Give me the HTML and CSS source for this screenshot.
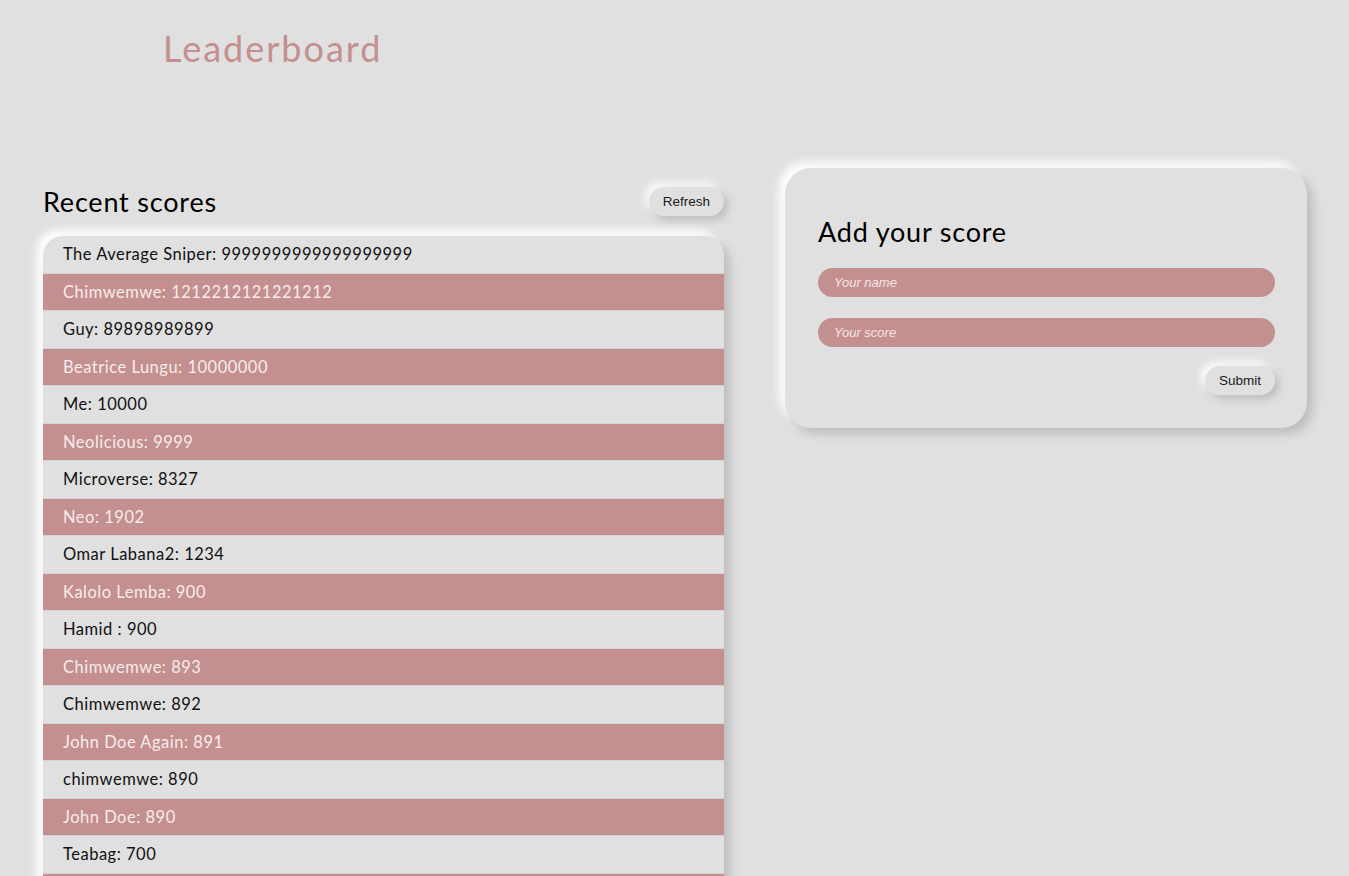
FILE: index.html
```html
<!DOCTYPE html>
<html lang="en">
<head>
<meta charset="utf-8">
<title>Leaderboard</title>
<link rel="stylesheet" href="styles.css">
</head>
<body>
<header class="top">
  <h1 class="brand">Leaderboard</h1>
</header>
<main class="layout">
  <section class="scores">
    <div class="scores-head">
      <h2 class="section-title">Recent scores</h2>
      <button class="neu-btn" type="button">Refresh</button>
    </div>
    <ul class="score-list">
      <li class="row">The Average Sniper: 9999999999999999999</li>
      <li class="row alt">Chimwemwe: 1212212121221212</li>
      <li class="row">Guy: 89898989899</li>
      <li class="row alt">Beatrice Lungu: 10000000</li>
      <li class="row">Me: 10000</li>
      <li class="row alt">Neolicious: 9999</li>
      <li class="row">Microverse: 8327</li>
      <li class="row alt">Neo: 1902</li>
      <li class="row">Omar Labana2: 1234</li>
      <li class="row alt">Kalolo Lemba: 900</li>
      <li class="row">Hamid : 900</li>
      <li class="row alt">Chimwemwe: 893</li>
      <li class="row">Chimwemwe: 892</li>
      <li class="row alt">John Doe Again: 891</li>
      <li class="row">chimwemwe: 890</li>
      <li class="row alt">John Doe: 890</li>
      <li class="row">Teabag: 700</li>
      <li class="row alt empty"></li>
    </ul>
  </section>
  <section class="card">
    <h2 class="section-title card-title">Add your score</h2>
    <form class="score-form">
      <input class="field" type="text" placeholder="Your name">
      <input class="field" type="text" placeholder="Your score">
      <div class="form-actions">
        <button class="neu-btn" type="button">Submit</button>
      </div>
    </form>
  </section>
</main>
</body>
</html>
```
FILE: styles.css
```css
* { box-sizing: border-box; }

body {
  margin: 0;
  background: #e0e0e0;
  font-family: "Lato", "Noto Sans", sans-serif;
  color: #111;
  overflow: hidden;
}

.top {
  padding: 24px 0 0 163px;
  height: 168px;
}

.brand {
  margin: 0;
  font-size: 36px;
  line-height: 48px;
  font-weight: 400;
  color: #c48f8f;
  letter-spacing: 2px;
}

.layout {
  display: flex;
  align-items: flex-start;
  gap: 61px;
  padding: 0 42px 0 43px;
}

.scores {
  width: 681px;
  flex: none;
  padding-top: 19px;
}

.scores-head {
  display: flex;
  justify-content: space-between;
  align-items: center;
  height: 29px;
  margin-bottom: 20px;
}

.section-title {
  margin: 0;
  font-size: 27px;
  font-weight: 400;
  color: #000;
  line-height: 32px;
  letter-spacing: 0.8px;
}

.neu-btn {
  font-family: "Liberation Sans", Arial, sans-serif;
  font-size: 13.5px;
  color: #1a1a1a;
  background: #e0e0e0;
  border: none;
  border-radius: 15px;
  height: 29px;
  padding: 0 14px;
  box-shadow: 4px 4px 8px #bcbcbc, -4px -4px 8px #ffffff;
  cursor: pointer;
}

.score-list {
  list-style: none;
  margin: 0;
  padding: 0;
  border-radius: 20px 20px 0 0;
  overflow: hidden;
  box-shadow: 6px 6px 10px #bebebe, -6px -6px 10px #ffffff;
}

.row {
  padding: 8px 20px;
  font-size: 16.5px;
  line-height: 20.5px;
  letter-spacing: 0.5px;
  color: #111;
  border-bottom: 1px solid #d4d4d4;
}

.row.alt {
  background: #c48f8f;
  color: #f6ecec;
}

.row.empty {
  height: 37.5px;
}

.card {
  width: 522px;
  flex: none;
  background: #e0e0e0;
  border-radius: 26px;
  padding: 48px 32px 33px 33px;
  box-shadow: 6px 6px 10px #bebebe, -6px -6px 10px #ffffff;
}

.card-title {
  margin-bottom: 20px;
}

.score-form {
  display: flex;
  flex-direction: column;
}

.field {
  height: 29px;
  border: none;
  border-radius: 15px;
  background: #c48f8f;
  padding: 0 16px;
  font-family: "Liberation Sans", Arial, sans-serif;
  font-size: 13px;
  font-style: italic;
  color: #fff;
  margin-bottom: 21px;
  outline: none;
}

.field::placeholder {
  color: #f4e6e6;
}

.form-actions {
  display: flex;
  justify-content: flex-end;
  margin-top: -2px;
}
```
